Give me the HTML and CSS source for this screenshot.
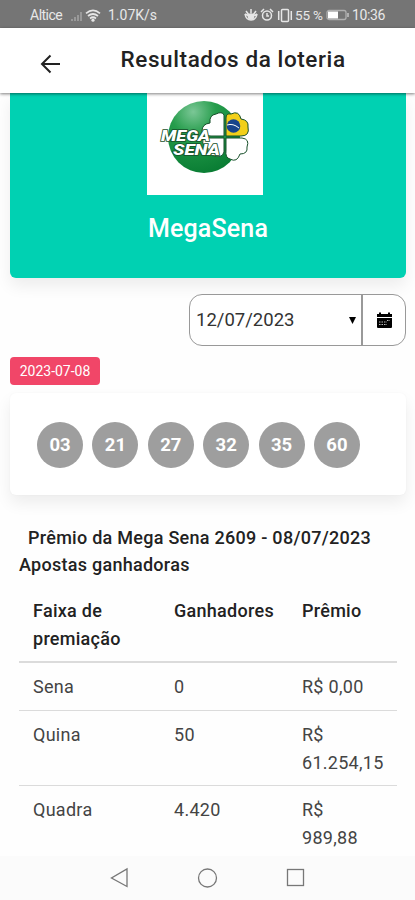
FILE: index.html
```html
<!DOCTYPE html>
<html lang="pt">
<head>
<meta charset="utf-8">
<title>Resultados da loteria</title>
<link rel="stylesheet" href="styles.css">
</head>
<body>
<div class="screen">
  <div class="status">
    <span class="carrier">Altice</span>
    <svg class="signal" width="36" height="16" viewBox="0 0 36 16">
      <path d="M3 14v-2h2v2zM6 14v-4h2v4zM9 14V8h2v6zM12 14V5h2v9z" fill="#999"/>
      <g fill="none" stroke="#e6e6e6" stroke-width="1.7"><path d="M18 6.3Q25 .5 32 6.3M20 9Q25 5 30 9M22 11.5Q25 9 28 11.5"/></g><circle cx="25" cy="13.2" r="1.6" fill="#e6e6e6"/>
    </svg>
    <span class="speed">1.07K/s</span>
    <svg class="alerts" width="50" height="16" viewBox="0 0 50 16" fill="none" stroke="#e6e6e6" stroke-width="1.5">
      <path d="M1 7Q2 13 7 13T13 7M2 4l3 4M7 2v4M12 4L9 8M1 7l4 2M13 7L9 9"/><circle cx="7" cy="9.500" r="2.600" fill="#e6e6e6"/>
      <circle cx="23" cy="8.500" r="4.500"/><path d="M23 6v3h2M17 5l3-3M26 2l3 3"/>
      <rect x="37.500" y="2.500" width="7" height="12" rx="1"/><path d="M34.700 4v9M47.300 4v9"/>
    </svg>
    <span class="percent">55 %</span>
    <svg class="battery" width="24" height="12" viewBox="0 0 24 12"><rect x="1" y="1.500" width="19" height="9" rx="2" fill="none" stroke="#b0b0b0" stroke-width="1.300"/><path d="M2 2.500h10v7H2z" fill="#fff"/><path d="M22 4v4" stroke="#b0b0b0" stroke-width="2"/></svg>
    <span class="clock">10:36</span>
  </div>
  <header class="bar">
    <svg class="back" width="22" height="22" viewBox="0 0 22 22" fill="none" stroke="#222" stroke-width="2"><path d="M21 11H3M11.500 2.500L3 11l8.500 8.500"/></svg>
    <h1>Resultados da loteria</h1>
  </header>
  <main class="content">
    <section class="hero">
      <svg class="logo" width="116" height="102" viewBox="0 0 116 102">
        <defs><radialGradient id="ball" cx="35%" cy="15%" r="90%"><stop offset="0" stop-color="#7bc796"/><stop offset=".35" stop-color="#269d4c"/><stop offset="1" stop-color="#087b32"/></radialGradient></defs>
        <path d="M0 0h116v102H0z" fill="#fff"/>
        <circle cx="57" cy="44" r="36" fill="url(#ball)"/>
        <g stroke="#174f2a" stroke-width="1" fill="#fff">
          <path d="M77 43V22Q75 18 69 21Q62 22 63 30Q55 31 55 38Q57 43 64 43z"/>
          <path d="M79 43V25Q79 20 84 21Q92 17 94 26Q102 27 101 34Q103 43 94 43z" fill="#f2cf19"/>
          <path d="M79 45H95Q103 46 100 54Q101 61 93 61Q90 70 83 66Q78 65 79 57z"/>
          <path d="M77 45V59Q75 65 69 63Q60 63 61 55Q52 50 58 45z"/>
        </g>
        <circle cx="86.500" cy="33" r="6.800" fill="#17448b"/><path d="M80 32q6-2 12 3" stroke="#fff" stroke-width="1" fill="none"/>
        <g class="logo-text"><text x="14" y="47.500" textLength="49" lengthAdjust="spacingAndGlyphs">MEGA</text><text x="26" y="62" textLength="47" lengthAdjust="spacingAndGlyphs">SENA</text></g>
      </svg>
      <h2>MegaSena</h2>
    </section>
    <div class="picker">
      <div class="date"><span>12/07/2023</span><svg width="7" height="7" viewBox="0 0 7 7"><path d="M0 0h7L3.500 7z"/></svg></div>
      <div class="calendar"><svg width="17" height="17" viewBox="0 0 17 17"><path d="M1 2h2V.5h2V2h7V.5h2V2h2v3H1zM1 6h15v9q0 1-1 1H2q-1 0-1-1z"/><path d="M3 12.500h8M3 10h8M11 8.500h3" stroke="#bbb" stroke-dasharray="1.500 1"/></svg></div>
    </div>
    <span class="tag">2023-07-08</span>
    <section class="numbers"><b>03</b><b>21</b><b>27</b><b>32</b><b>35</b><b>60</b></section>
    <section class="prizes">
      <h3 class="draw">Prêmio da Mega Sena 2609 - 08/07/2023</h3>
      <h3 class="winners">Apostas ganhadoras</h3>
      <table>
        <thead><tr><th class="c1">Faixa de premiação</th><th class="c2">Ganhadores</th><th class="c3">Prêmio</th></tr></thead>
        <tbody>
          <tr><td>Sena</td><td>0</td><td>R$ 0,00</td></tr>
          <tr><td>Quina</td><td>50</td><td>R$ 61.254,15</td></tr>
          <tr><td>Quadra</td><td>4.420</td><td>R$ 989,88</td></tr>
        </tbody>
      </table>
    </section>
  </main>
  <nav class="nav">
    <svg width="415" height="44" viewBox="0 0 415 44" fill="none" stroke="#777" stroke-width="1.300"><path d="M127 13v17.500L111.500 22z"/><circle cx="207.500" cy="22" r="9"/><rect x="287.500" y="13.500" width="16" height="16"/></svg>
  </nav>
</div>
</body>
</html>
```
FILE: styles.css
```css
* { box-sizing: border-box; }
body { margin: 0; font-family: Roboto, "Liberation Sans", sans-serif; color: #222; background: #fff; }
h1, h2, h3 { margin: 0; font-weight: 500; white-space: nowrap; }
svg { display: block; flex: none; }
.screen { width: 415px; height: 900px; overflow: hidden; display: flex; flex-direction: column; }
.status { height: 28px; flex: none; background: #757575; color: #e8e8e8; display: flex; align-items: center; padding: 2px 0 0 30px; font-size: 14px; white-space: nowrap; }
.carrier { width: 38px; letter-spacing: -.5px; }
.signal { margin-right: 4px; }
.speed { width: 136px; }
.percent { width: 31px; margin-left: 1px; font-size: 13.5px; letter-spacing: -.2px; }
.battery { margin-right: 2px; }
.clock { letter-spacing: -.35px; }
.bar { height: 65px; flex: none; display: flex; align-items: center; padding-left: 39px; background: #fff; box-shadow: 0 1px 3px rgba(0,0,0,.5); z-index: 1; }
.back { margin-top: 6px; }
.bar h1 { margin: -3px 0 0 59.5px; font-size: 22.5px; letter-spacing: .6px; }
.content { flex: 1; min-height: 0; overflow: hidden; padding: 0 9px 0 10px; background: #fefefe; }
.hero { height: 185px; border-radius: 0 0 6px 6px; background: #00d1b2; display: flex; flex-direction: column; align-items: center; box-shadow: 0 8px 16px rgba(0,0,0,.07); }
.logo { margin-right: 6px; }
.logo-text { font: italic 900 15.5px/1 Roboto, sans-serif; fill: #fff; stroke: #174f2a; stroke-width: 1.5px; paint-order: stroke; }
.hero h2 { margin-top: 18px; line-height: 32px; font-size: 25px; letter-spacing: .15px; color: #fff; }
.picker { width: 217px; height: 52px; margin: 16px 0 0 auto; display: flex; border: 1px solid #999; border-radius: 13px; background: #fff; }
.date { width: 173px; display: flex; align-items: center; justify-content: space-between; padding: 0 5px 0 6px; font-size: 18.5px; color: #333; border-right: 2px solid #999; }
.calendar { flex: 1; display: flex; align-items: center; justify-content: center; }
.tag { display: flex; align-items: center; justify-content: center; width: 90px; height: 28px; margin-top: 11px; border-radius: 4px; background: #f14668; color: #fff; font-size: 14px; }
.numbers { height: 102px; margin-top: 8px; padding: 1px 0 0 27px; display: flex; align-items: center; gap: 9.4px; border-radius: 6px; background: #fff; box-shadow: 0 8px 16px rgba(0,0,0,.07), 0 0 2px rgba(0,0,0,.04); }
.numbers b { width: 46px; height: 46px; border-radius: 50%; background: #9e9e9e; color: #fff; display: flex; align-items: center; justify-content: center; font-size: 18.5px; }
.prizes { margin-top: 28.5px; padding: 0 9px; font-size: 18px; line-height: 27.6px; }
.prizes h3 { font-size: 18px; letter-spacing: .27px; }
.draw { padding-left: 9px; }
table { width: 378px; margin-top: 8.5px; table-layout: fixed; border-collapse: separate; border-spacing: 0; letter-spacing: .28px; color: #444; }
th { text-align: left; font-weight: 500; color: #222; border-bottom: 2px solid #dbdbdb; }
td { border-bottom: 1px solid #dbdbdb; }
th, td { vertical-align: top; padding: 10px 0 9px 14px; }
.c1 { width: 141px; padding-right: 25px; }
.c2 { width: 128px; }
.c3 { padding-right: 0; }
td:last-child { padding-right: 15px; }
.nav { height: 44px; flex: none; background: #fbfbfb; }
```
